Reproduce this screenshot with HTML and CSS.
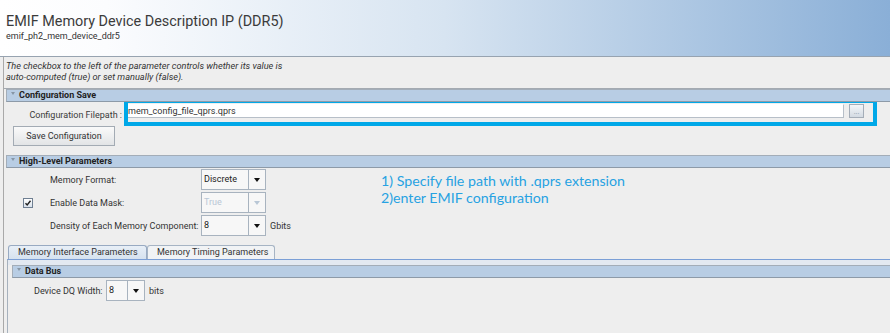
FILE: index.html
```html
<!DOCTYPE html>
<html lang="en">
<head>
    <meta charset="UTF-8">
    <meta name="viewport" content="width=device-width, initial-scale=1.0">
    <title>EMIF Memory Device Description IP (DDR5)</title>
    <link rel="stylesheet" href="styles.css">
</head>
<body>
    <header class="banner">
        <div class="title">EMIF Memory Device Description IP (DDR5)</div>
        <div class="subtitle">emif_ph2_mem_device_ddr5</div>
    </header>

    <div class="panel">
        <div class="note">
            The checkbox to the left of the parameter controls whether its value is<br>
            auto-computed (true) or set manually (false).
        </div>

        <!-- Configuration Save -->
        <div class="group-head"><span class="caret"></span>Configuration Save</div>
        <div class="file-row">
            <span class="file-label">Configuration Filepath :</span>
            <div class="highlight">
                <div class="text-field">mem_config_file_qprs.qprs</div>
                <div class="browse">...</div>
            </div>
        </div>
        <div class="btn-row">
            <button class="save-btn">Save Configuration</button>
        </div>

        <!-- High-Level Parameters -->
        <div class="group-head spaced"><span class="caret"></span>High-Level Parameters</div>
        <div class="params">
            <div class="param-list">
                <div class="param-row">
                    <span class="check-cell"></span>
                    <span class="param-label">Memory Format:</span>
                    <div class="combo wide">
                        <span class="combo-value">Discrete</span>
                        <span class="combo-arrow"><span class="tri"></span></span>
                    </div>
                </div>
                <div class="param-row">
                    <span class="check-cell">
                        <span class="checkbox">
                            <svg width="8" height="8" viewBox="0 0 8 8"><path d="M1.5 4.2 L3.2 6 L6.5 1.8" fill="none" stroke="#222" stroke-width="1.4"/></svg>
                        </span>
                    </span>
                    <span class="param-label">Enable Data Mask:</span>
                    <div class="combo wide disabled">
                        <span class="combo-value">True</span>
                        <span class="combo-arrow"><span class="tri"></span></span>
                    </div>
                </div>
                <div class="param-row">
                    <span class="check-cell"></span>
                    <span class="param-label">Density of Each Memory Component:</span>
                    <div class="combo wide">
                        <span class="combo-value">8</span>
                        <span class="combo-arrow"><span class="tri"></span></span>
                    </div>
                    <span class="unit">Gbits</span>
                </div>
            </div>
            <div class="annotation">
                1) Specify file path with .qprs extension<br>
                2)enter EMIF configuration
            </div>
        </div>

        <!-- Tabs -->
        <div class="tabs">
            <div class="tab active">Memory Interface Parameters</div>
            <div class="tab">Memory Timing Parameters</div>
        </div>
        <div class="tab-body">
            <div class="group-head"><span class="caret"></span>Data Bus</div>
            <div class="dq-row">
                <span class="dq-label">Device DQ Width:</span>
                <div class="combo narrow">
                    <span class="combo-value">8</span>
                    <span class="combo-arrow"><span class="tri"></span></span>
                </div>
                <span class="unit">bits</span>
            </div>
        </div>
    </div>
</body>
</html>
```

FILE: styles.css
```css
body {
    margin: 0;
    padding: 0;
    width: 890px;
    height: 333px;
    overflow: hidden;
    background-color: #eeeeee;
    font-family: Roboto, "Liberation Sans", sans-serif;
    color: #333333;
    white-space: nowrap;
}

/* top banner with the blue fade */
.banner {
    box-sizing: border-box;
    height: 57px;
    padding: 13px 0 0 6px;
    border-bottom: 1px solid #97a3b0;
    background: linear-gradient(to right, #ffffff 0%, #fbfcfe 12%, #d7e4f1 50%, #8aafd7 100%);
}
.title {
    font-size: 14.4px;
    line-height: 17px;
    color: #3b3b3b;
}
.subtitle {
    font-size: 9px;
    line-height: 11px;
    margin-top: 1px;
    color: #333333;
}

.panel {
    margin-left: 3px;
    border-left: 1px solid #a9a9a9;
    height: 276px;
    font-size: 9px;
}

.note {
    box-sizing: border-box;
    height: 32px;
    padding: 3px 0 0 2px;
    font-style: italic;
    font-size: 9.2px;
    line-height: 11px;
    color: #333333;
    border-bottom: 1px solid #a4aab1;
}

/* blue section headers */
.group-head {
    position: relative;
    height: 11px;
    margin-left: 2px;
    padding-left: 12px;
    border: 1px solid #a3adb8;
    border-right: none;
    border-bottom-color: #8d9aa8;
    background-color: #b8cde4;
    font-weight: bold;
    font-size: 9px;
    line-height: 11px;
    color: #222222;
}
.group-head.spaced {
    margin-top: 9px;
}
.caret {
    position: absolute;
    left: 4px;
    top: 2px;
    width: 0;
    height: 0;
    border-left: 2.5px solid transparent;
    border-right: 2.5px solid transparent;
    border-top: 3px solid #8796a6;
}

/* file path row with the highlight box */
.file-row {
    display: flex;
    align-items: flex-start;
    margin-top: -3px;
}
.file-label {
    width: 118px;
    padding-top: 11px;
    padding-right: 2px;
    text-align: right;
    color: #3a3a3a;
}
.highlight {
    display: flex;
    align-items: flex-start;
    gap: 5px;
    width: 745px;
    height: 18px;
    padding: 1px 0 0 0;
    border: 4px solid #00a8e8;
}
.text-field {
    box-sizing: border-box;
    width: 716px;
    height: 14px;
    background-color: #ffffff;
    border: 1px solid #b7bfc8;
    border-left: none;
    border-top-color: #ffffff;
    font-size: 9px;
    line-height: 12px;
    color: #333333;
}
.browse {
    box-sizing: border-box;
    width: 15px;
    height: 14px;
    border: 1px solid #a4adb8;
    background: linear-gradient(#f3f6f9, #d3dae2);
    font-size: 7px;
    line-height: 15px;
    text-align: center;
    color: #8090a0;
}

.btn-row {
    padding-left: 9px;
}
.save-btn {
    box-sizing: border-box;
    width: 102px;
    height: 20px;
    margin: 0;
    border: 1px solid #a3abb4;
    background: linear-gradient(#fafafa, #e2e4e6);
    font-family: Roboto, "Liberation Sans", sans-serif;
    font-size: 9px;
    color: #333333;
}

/* parameter rows */
.params {
    display: flex;
}
.param-list {
    width: 377px;
    padding-top: 1px;
    display: flex;
    flex-direction: column;
    gap: 2px;
}
.param-row {
    display: flex;
    align-items: center;
    height: 21px;
}
.check-cell {
    box-sizing: border-box;
    width: 46px;
    display: flex;
    padding-left: 19px;
}
.checkbox {
    box-sizing: border-box;
    width: 10px;
    height: 10px;
    border: 1px solid #6f7f92;
    background: linear-gradient(#ffffff, #d9e2ec);
    display: flex;
    align-items: center;
    justify-content: center;
}
.param-label {
    width: 151px;
    color: #333333;
}
.combo {
    box-sizing: border-box;
    display: flex;
    height: 21px;
    border: 1px solid #a8b3bf;
    background-color: #f7f7f7;
}
.combo.wide {
    width: 65px;
}
.combo.narrow {
    width: 39px;
}
.combo-value {
    flex: 1;
    padding: 4px 0 0 2px;
    font-size: 9px;
    color: #222222;
    border-right: 1px solid #a8b3bf;
}
.combo-arrow {
    width: 16px;
    display: flex;
    align-items: center;
    justify-content: center;
}
.tri {
    width: 0;
    height: 0;
    border-left: 3.5px solid transparent;
    border-right: 3.5px solid transparent;
    border-top: 4px solid #111111;
}
.combo.disabled .combo-value {
    color: #b9c7d6;
}
.combo.disabled .tri {
    border-top-color: #b9c7d6;
}
.unit {
    margin-left: 4px;
    color: #333333;
}

.annotation {
    padding-top: 4px;
    font-family: Lato, "Liberation Sans", sans-serif;
    font-size: 14.2px;
    line-height: 17px;
    color: #27a2e2;
}

/* tabs */
.tabs {
    display: flex;
    margin-top: 9px;
    margin-left: 4px;
    height: 14px;
}
.tab {
    box-sizing: border-box;
    height: 14px;
    padding: 0 9px;
    border: 1px solid #a6b4c4;
    border-bottom: none;
    border-radius: 3px 3px 0 0;
    background: #f1f3f5;
    font-size: 9px;
    line-height: 13px;
    color: #333333;
}
.tab.active {
    width: 139px;
    background: linear-gradient(#e8eff7, #d6e2ef);
    border-color: #98aac2;
}
.tab:not(.active) {
    width: 128px;
}
.tab-body {
    margin-left: 3px;
    border-left: 1px solid #a6b1bd;
    border-top: 1px solid #7b9fd6;
    padding-top: 5px;
    padding-left: 2px;
    background: linear-gradient(#e3e9f1 0px, #e3e9f1 5px, #eeeeee 5px);
    height: 70px;
}
.dq-row {
    display: flex;
    align-items: center;
    height: 21px;
    margin-top: 2px;
    padding-left: 24px;
}
.dq-label {
    width: 72px;
}
```
